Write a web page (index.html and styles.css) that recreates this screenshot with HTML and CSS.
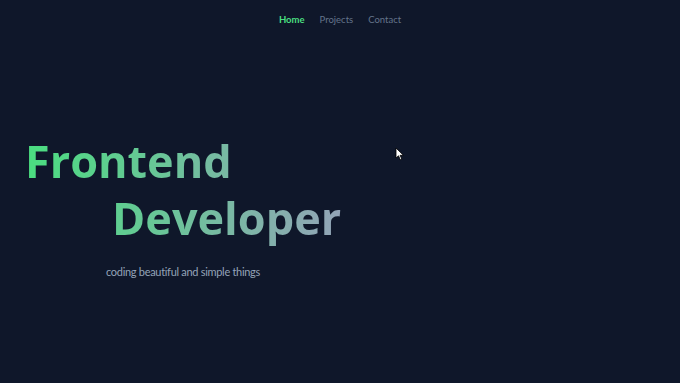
FILE: index.html
```html
<!DOCTYPE html>
<html lang="en">
<head>
  <meta charset="UTF-8">
  <title>Frontend Developer</title>
  <meta name="viewport" content="width=device-width, initial-scale=1.0">
  <link rel="stylesheet" href="styles.css">
</head>
<body>
<nav class="nav">
  <a href="#" class="nav-link active">Home</a>
  <a href="#" class="nav-link">Projects</a>
  <a href="#" class="nav-link">Contact</a>
</nav>
<main class="hero">
  <h1 class="title">
    <span class="line line-one">Frontend</span>
    <span class="line line-two">Developer</span>
  </h1>
  <p class="tagline">coding beautiful and simple things</p>
  <svg class="cursor" width="10" height="14" viewBox="0 0 10 14">
    <path d="M1 1 L1 11 L3.5 8.8 L5.3 12.8 L6.8 12.1 L5.1 8.3 L8.4 8.3 Z" fill="#fff" stroke="#000" stroke-width="0.8"/>
  </svg>
</main>
</body>
</html>
```
FILE: styles.css
```css
* { box-sizing: border-box; }
html, body {
  margin: 0;
  height: 100%;
}
body {
  font-family: 'Open Sans', 'Noto Sans', sans-serif;
  background: #0f172a;
  color: #94a3b8;
  position: relative;
}
.nav {
  display: flex;
  justify-content: center;
  gap: 15px;
  padding-top: 14px;
  font-family: 'Lato', sans-serif;
}
.nav-link {
  font-size: 9.5px;
  color: #64748b;
  text-decoration: none;
}
.nav-link.active {
  color: #4ade80;
  font-weight: 700;
}
.hero {
  padding: 107px 0 0 25px;
}
.title {
  margin: 0;
  font-size: 45px;
  font-weight: 700;
  line-height: 57px;
}
.line {
  display: block;
  width: max-content;
  background: linear-gradient(to right, #4ade80, #94a3b8);
  background-size: 320px 100%;
  -webkit-background-clip: text;
  background-clip: text;
  color: transparent;
}
.line-one { background-position: 0 0; }
.line-two {
  margin-left: 87px;
  background-position: -87px 0;
}
.tagline {
  margin: 19px 0 0 81px;
  font-family: 'Lato', sans-serif;
  font-size: 11px;
  letter-spacing: -0.3px;
  color: #94a3b8;
}
.cursor {
  position: absolute;
  left: 395px;
  top: 147px;
}
```
